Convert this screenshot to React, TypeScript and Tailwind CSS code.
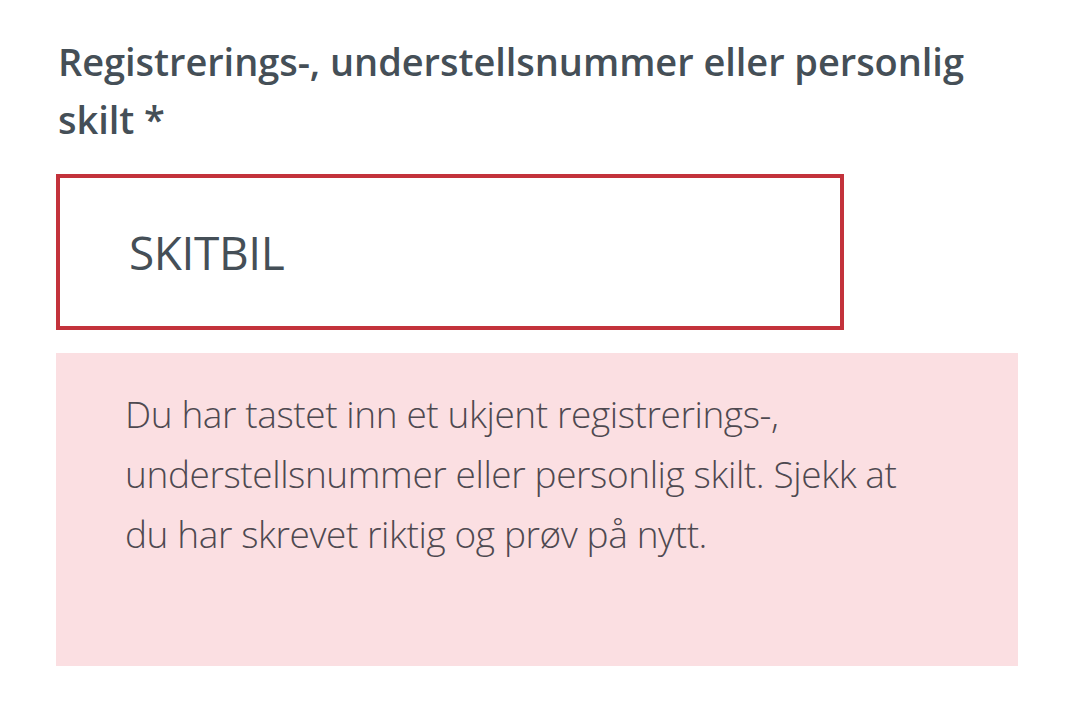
import React from "react";

export default function App() {
  return (
    <div className="w-[1080px] h-[708px] bg-white overflow-hidden pl-[56px] pt-[32px]" style={{ fontFamily: '"Open Sans", "Noto Sans", sans-serif' }}>
      <label className="block pl-[2px] text-[38px] leading-[58px] font-semibold text-[#454f57] tracking-[-0.05px]">
        <span className="block whitespace-nowrap">Registrerings-, understellsnummer eller personlig</span>
        <span className="block whitespace-nowrap">skilt *</span>
      </label>
      <div className="mt-[26px] w-[788px] h-[156px] border-[4px] border-[#c3323b] flex items-center pl-[69px]">
        <span className="text-[46px] font-normal text-[#454f57] tracking-[-0.4px]">SKITBIL</span>
      </div>
      <div className="mt-[23px] w-[962px] h-[313px] bg-[#fbdfe2] pl-[69px] pr-[69px] pt-[31px]">
        <p className="text-[37px] leading-[60px] font-light text-[#4e4950] tracking-[-0.4px]">
          <span className="block whitespace-nowrap">Du har tastet inn et ukjent registrerings-,</span>
          <span className="block whitespace-nowrap">understellsnummer eller personlig skilt. Sjekk at</span>
          <span className="block whitespace-nowrap">du har skrevet riktig og prøv på nytt.</span>
        </p>
      </div>
    </div>
  );
}
